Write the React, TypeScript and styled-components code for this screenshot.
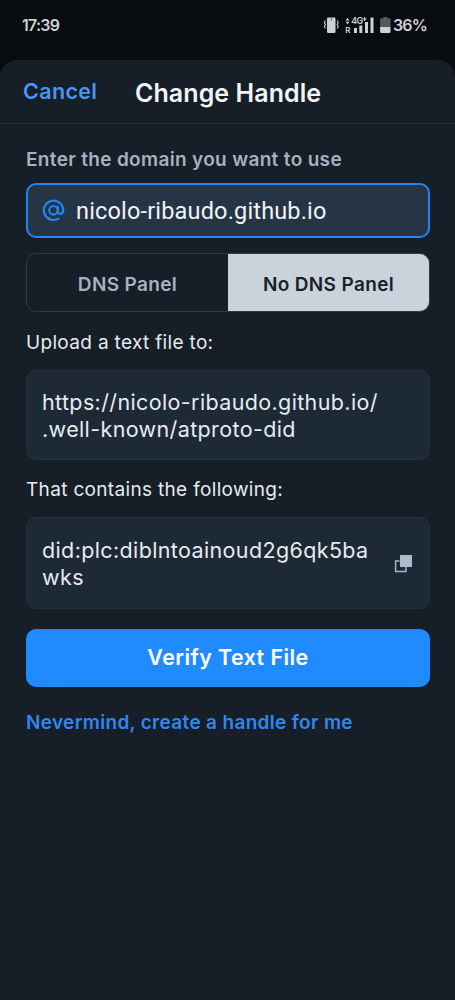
import React from "react";
import styled, { createGlobalStyle } from "styled-components";

const GlobalStyle = createGlobalStyle`
  * { box-sizing: border-box; }
  body { margin: 0; background: #080b10; font-family: Inter, sans-serif; }
`;

const Screen = styled.div`
  width: 455px;
  height: 1000px;
  display: flex;
  flex-direction: column;
  overflow: hidden;
  background: #080b10;
`;

const StatusBar = styled.div`
  height: 60px;
  flex: none;
  display: flex;
  justify-content: space-between;
  align-items: flex-start;
  padding: 15px 28px 0 22px;
  color: #cfd1d4;
  font: 600 16px/20px Inter, sans-serif;
  white-space: nowrap;
`;

const Clock = styled.span`
  letter-spacing: -0.75px;
`;

const StatusIcons = styled.div`
  display: flex;
  align-items: flex-start;
`;

const Percent = styled.span`
  margin-left: 1px;
  line-height: 21px;
  letter-spacing: -0.8px;
`;

const Sheet = styled.main`
  flex: 1;
  background: #161e27;
  border-radius: 17px 17px 0 0;
`;

const Header = styled.header`
  height: 64px;
  display: flex;
  align-items: center;
  padding-left: 23px;
  border-bottom: 1px solid #232e3a;
`;

const Cancel = styled.button`
  width: 112px;
  padding: 0 0 1px;
  border: 0;
  background: none;
  text-align: left;
  color: #4896f4;
  font: 600 21.5px/28px Inter, sans-serif;
  letter-spacing: 0.35px;
`;

const Title = styled.h1`
  margin: 2px 0 0;
  color: #f1f4f8;
  font: 600 25px/32px Inter, sans-serif;
  letter-spacing: 0.07px;
  white-space: nowrap;
`;

const Form = styled.div`
  display: flex;
  flex-direction: column;
  padding: 22px 25px 0 26px;
`;

const Label = styled.p<{ $muted?: boolean }>`
  margin: 0;
  height: 26px;
  color: ${(p) => (p.$muted ? "#a5b2c1" : "#e6ebf1")};
  font: ${(p) => (p.$muted ? 600 : 400)} 19px/27px Inter, sans-serif;
  letter-spacing: ${(p) => (p.$muted ? 0.33 : 0.33)}px;
  white-space: nowrap;
`;

const Field = styled.div`
  height: 55px;
  margin-top: 11px;
  display: flex;
  align-items: center;
  gap: 11px;
  padding-left: 14px;
  border: 2px solid #2385f5;
  border-radius: 10px;
  background: #263545;
`;

const Domain = styled.span`
  color: #f1f4f8;
  font: 400 23.5px/28px Roboto, sans-serif;
  letter-spacing: 0.17px;
`;

const Segments = styled.div`
  height: 59px;
  margin: 15px 0 17px;
  display: flex;
  border: 1px solid #2e3b49;
  border-radius: 10px;
  overflow: hidden;
`;

const Segment = styled.button<{ $active?: boolean }>`
  flex: 1;
  padding: 5px 0 0;
  border: 0;
  background: ${(p) => (p.$active ? "#cad2dc" : "transparent")};
  color: ${(p) => (p.$active ? "#18212b" : "#a5b2c1")};
  font: 600 19px/26px Inter, sans-serif;
  letter-spacing: 0.35px;
`;

const CodeBox = styled.div<{ $height: number; $gap: number }>`
  height: ${(p) => p.$height}px;
  margin: 15px 0 ${(p) => p.$gap}px;
  display: flex;
  align-items: center;
  justify-content: space-between;
  padding: 1px 17px 0 15px;
  border: 1px solid #25313d;
  border-radius: 10px;
  background: #1e2936;
  color: #e6ebf1;
  font: 400 21.5px/27px Inter, sans-serif;
  letter-spacing: 0.37px;
  white-space: nowrap;
`;

const Verify = styled.button`
  height: 58px;
  padding: 0 0 2px;
  border: 0;
  border-radius: 10px;
  background: #208bfe;
  color: #fff;
  font: 600 21.5px/28px Inter, sans-serif;
  letter-spacing: 0.4px;
`;

const TextLink = styled.a`
  margin-top: 22px;
  color: #2e88f0;
  font: 600 19px/28px Inter, sans-serif;
  letter-spacing: 0.33px;
  white-space: nowrap;
`;

const DeviceIcons = () => (
  <svg width="69" height="20" viewBox="323 15 69 20" fill="#cfd1d4">
    <rect x="327" y="17.5" width="8.5" height="15.5" rx="1.2" />
    <path d="M331.3 17.5v3" stroke="#555a60" strokeWidth="1" />
    <path d="M325.4 20.5l-1 2 1 2-1 2 1 2M337.2 20.5l1 2-1 2 1 2-1 2" fill="none" stroke="#cfd1d4" strokeWidth="1.1" />
    <path d="M345.5 20.5l2-2.5 2 2.5zM345.5 21.8l2 2.5 2-2.5z" />
    <text x="345.2" y="32.8" fontFamily="Inter, sans-serif" fontWeight="600" fontSize="8">R</text>
    <text x="351.3" y="23.8" fontFamily="Inter, sans-serif" fontWeight="600" fontSize="8.8" letterSpacing="-0.6">4G</text>
    <path d="M362.6 19h4M364.6 17v4" stroke="#cfd1d4" strokeWidth="1.1" />
    <rect x="354" y="28" width="3" height="5" />
    <rect x="359.3" y="25.5" width="3" height="7.5" />
    <rect x="365" y="22" width="3" height="11" />
    <rect x="370.5" y="17.5" width="3" height="15.5" />
    <path d="M383.2 17h4v1.3h2a1.3 1.3 0 0 1 1.3 1.3V27h-10.4v-7.4a1.3 1.3 0 0 1 1.3-1.3h1.8z" fill="#57595d" />
    <path d="M380.1 27h10.4v4.5a1.5 1.5 0 0 1-1.5 1.5h-7.4a1.5 1.5 0 0 1-1.5-1.5z" />
  </svg>
);

const AtIcon = () => (
  <svg width="23" height="23" viewBox="0 0 23 23" fill="none" stroke="#2385f5" strokeWidth="2.2" strokeLinecap="round">
    <circle cx="11.5" cy="11.3" r="4.3" />
    <path d="M15.8 7.6v4.8c0 3.6 5.4 3.4 5.4-1.2A9.7 9.7 0 1 0 16.3 19.7" />
  </svg>
);

const CopyIcon = () => (
  <svg width="18" height="18" viewBox="0 0 18 18">
    <path d="M5.5 6.1H1.6v10.3h10.3V12" fill="none" stroke="#aab7c7" strokeWidth="1.5" />
    <rect x="6" y="0" width="12" height="12" fill="#aebbcb" />
  </svg>
);

export default function App() {
  return (
    <Screen>
      <GlobalStyle />
      <StatusBar>
        <Clock>17:39</Clock>
        <StatusIcons>
          <DeviceIcons />
          <Percent>36%</Percent>
        </StatusIcons>
      </StatusBar>
      <Sheet>
        <Header>
          <Cancel>Cancel</Cancel>
          <Title>Change Handle</Title>
        </Header>
        <Form>
          <Label $muted>Enter the domain you want to use</Label>
          <Field>
            <AtIcon />
            <Domain>nicolo-ribaudo.github.io</Domain>
          </Field>
          <Segments>
            <Segment>DNS Panel</Segment>
            <Segment $active>No DNS Panel</Segment>
          </Segments>
          <Label>Upload a text file to:</Label>
          <CodeBox $height={90} $gap={16}>
            <span>https://nicolo-ribaudo.github.io/<br />.well-known/atproto-did</span>
          </CodeBox>
          <Label>That contains the following:</Label>
          <CodeBox $height={92} $gap={20}>
            <span>did:plc:diblntoainoud2g6qk5ba<br />wks</span>
            <CopyIcon />
          </CodeBox>
          <Verify>Verify Text File</Verify>
          <TextLink>Nevermind, create a handle for me</TextLink>
        </Form>
      </Sheet>
    </Screen>
  );
}
